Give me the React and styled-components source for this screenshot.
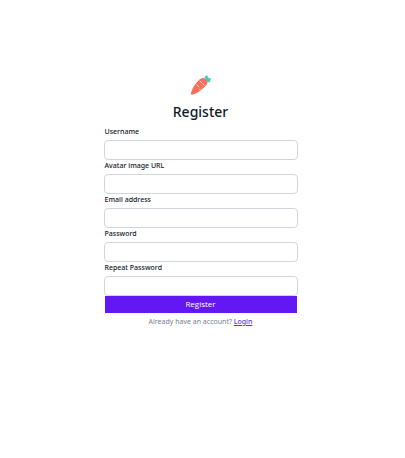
import React from "react";
import styled, { createGlobalStyle } from "styled-components";

const GlobalStyle = createGlobalStyle`
  *, *::before, *::after { box-sizing: border-box; }
  body {
    margin: 0;
    background: #fff;
    color: #111827;
    font-family: "Noto Sans", "Open Sans", sans-serif;
  }
`;

const Page = styled.main`
  display: flex;
  flex-direction: column;
  align-items: center;
  min-height: 100vh;
  padding: 74px 20px 16px 16px;
`;

const Logo = styled.svg`
  width: 22px;
  height: 22px;
`;

const Title = styled.h1`
  margin: 5px 0 0;
  font-size: 14px;
  font-weight: 500;
  line-height: 22px;
`;

const Form = styled.form`
  display: flex;
  flex-direction: column;
  width: 100%;
  max-width: 194px;
  margin-top: 3px;
`;

const Field = styled.div`
  display: flex;
  flex-direction: column;
  gap: 2px;
`;

const Label = styled.label`
  padding-left: 1px;
  font-size: 7px;
  font-weight: 500;
  line-height: 12px;
`;

const Input = styled.input`
  width: 100%;
  height: 20px;
  padding: 2px 6px;
  border: 1px solid #d1d5db;
  border-radius: 4px;
  background: #fff;
  color: inherit;
  font: inherit;
  font-size: 8px;
`;

const SubmitButton = styled.button`
  margin: 0 1px;
  padding: 0 0 1px;
  border: 0;
  background: #6317f3;
  color: #fff;
  font: inherit;
  font-family: "Open Sans", "Noto Sans", sans-serif;
  font-size: 8px;
  font-weight: 500;
  line-height: 16px;
  cursor: pointer;
`;

const Hint = styled.p`
  margin: 4px 0 0;
  color: #7b808a;
  font-size: 7px;
  line-height: 10px;
`;

const LoginLink = styled.a`
  color: #5b35e6;
  font-weight: 500;
  text-decoration: underline;
`;

const fields = [
  { id: "username", label: "Username", type: "text" },
  { id: "avatar", label: "Avatar image URL", type: "text" },
  { id: "email", label: "Email address", type: "email" },
  { id: "password", label: "Password", type: "password" },
  { id: "repeat-password", label: "Repeat Password", type: "password" },
];

function CarrotLogo() {
  return (
    <Logo viewBox="0 0 44 44" role="img" aria-label="Carrot">
      <path d="M31 13 29 7l3-5 4 3 1 3 5 1-1 4-2 4-6-1z" fill="#45d0b8" />
      <path d="M2 41C1 36 8 22 16 14c6-7 12-8 16-3 5 5 3 10-4 16C20 35 7 43 2 41z" fill="#fa6f5c" />
      <path d="m20 14 4 4M26 20l2 3M14 22l4 4M19 30l2 2" fill="none" stroke="#ffd0c4" strokeWidth="2" strokeLinecap="round" />
    </Logo>
  );
}

export default function App() {
  return (
    <>
      <GlobalStyle />
      <Page>
        <CarrotLogo />
        <Title>Register</Title>
        <Form onSubmit={(event) => event.preventDefault()}>
          {fields.map(({ id, label, type }) => (
            <Field key={id}>
              <Label htmlFor={id}>{label}</Label>
              <Input id={id} name={id} type={type} />
            </Field>
          ))}
          <SubmitButton type="submit">Register</SubmitButton>
        </Form>
        <Hint>
          Already have an account? <LoginLink href="#login">Login</LoginLink>
        </Hint>
      </Page>
    </>
  );
}
